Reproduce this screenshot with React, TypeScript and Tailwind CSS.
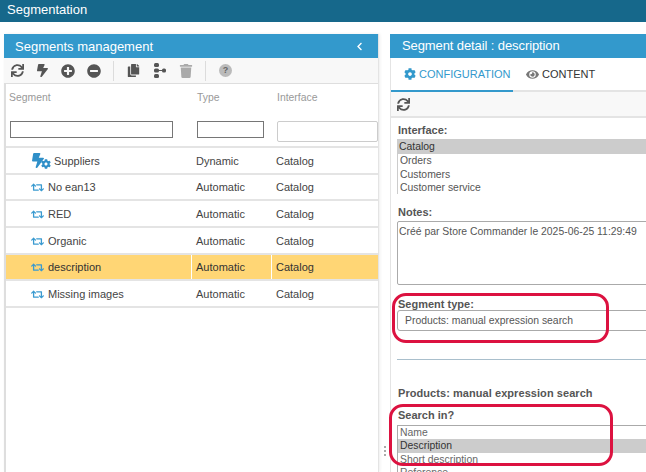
import React from "react";
import { FaSync, FaBolt, FaPlusCircle, FaMinusCircle, FaCopy, FaTrash, FaCog, FaEye, FaRetweet, FaChevronLeft } from "react-icons/fa";

const DynIcon = () => (
  <div className="relative w-[19px] h-[16px] shrink-0 text-[#2f8fc8]">
    <FaBolt preserveAspectRatio="none" className="absolute left-0 top-0 w-[12px] h-[15px]" />
    <FaCog size={10} className="absolute right-0 bottom-0" />
  </div>
);

const rows = [
  { name: "Suppliers", type: "Dynamic", h: "h-[27px]", dyn: true },
  { name: "No ean13", type: "Automatic", h: "h-[26px]" },
  { name: "RED", type: "Automatic", h: "h-[27px]" },
  { name: "Organic", type: "Automatic", h: "h-[27px]" },
  { name: "description", type: "Automatic", h: "h-[26px]", sel: true },
  { name: "Missing images", type: "Automatic", h: "h-[27px]" },
];

const Sep = () => <div className="w-px h-[20px] bg-[#dcdcdc]" />;

const Tree = () => (
  <svg width="12" height="15" viewBox="0 0 12 15" fill="#555">
    <rect x="0" y="0" width="5" height="4" rx="1.5" />
    <rect x="0" y="5.5" width="5" height="4" rx="1.5" />
    <rect x="0" y="11" width="5" height="4" rx="1.5" />
    <rect x="8" y="5.5" width="4" height="4" rx="1.5" />
    <rect x="5" y="7" width="3" height="1" />
  </svg>
);

export default function App() {
  return (
    <div className="w-[646px] h-[472px] overflow-hidden bg-white relative text-[#333] font-['Liberation_Sans',Arial,sans-serif]">
      <div className="h-[22px] bg-[#16688b] text-white text-[13px] leading-[20px] pl-[7px]">Segmentation</div>
      <div className="flex pt-[12px] pl-[4px] h-[450px]">
        {/* Left */}
        <div className="w-[375px] shrink-0 flex flex-col border-r border-[#e4e4e4] shadow-[1px_0_3px_#eeeeee]">
          <div className="h-[24px] bg-[#3399cc] text-white text-[13px] leading-[23px] pl-[11px] pr-[14px] flex items-center justify-between shrink-0">
            <span>Segments management</span>
            <FaChevronLeft size={9} />
          </div>
          <div className="h-[25px] bg-[#f8f8f8] flex items-center shrink-0 pl-[7px] text-[#555]">
            <FaSync size={13} />
            <FaBolt preserveAspectRatio="none" className="ml-[13px] w-[11px] h-[13px]" />
            <FaPlusCircle size={14} className="ml-[13px]" />
            <FaMinusCircle size={14} className="ml-[12px]" />
            <div className="ml-[12px]"><Sep /></div>
            <FaCopy size={13} className="ml-[13px]" />
            <div className="ml-[14px]"><Tree /></div>
            <FaTrash size={14} className="ml-[13px] text-[#aaaaaa]" />
            <div className="ml-[12px]"><Sep /></div>
            <div className="ml-[13px] w-[13px] h-[13px] rounded-full bg-[#bbbbbb] text-[#666] text-[9px] font-bold flex items-center justify-center">?</div>
          </div>
          <div className="border-t border-l-2 border-[#dedede] flex-1 min-h-0 flex flex-col">
            <div className="h-[64px] border-b-2 border-[#e4e4e4] flex shrink-0 text-[10.4px] text-[#999]">
              <div className="w-[186px] pl-[3px] pt-[8px] shrink-0">
                <div className="leading-[12px]">Segment</div>
                <div className="w-[163px] h-[17px] border border-[#767676] bg-white mt-[17px] ml-px" />
              </div>
              <div className="w-[80px] pl-[5px] pt-[8px] shrink-0">
                <div className="leading-[12px]">Type</div>
                <div className="w-[67px] h-[17px] border border-[#767676] bg-white mt-[17px]" />
              </div>
              <div className="flex-1 pl-[5px] pt-[8px] min-w-0">
                <div className="leading-[12px]">Interface</div>
                <div className="h-[21px] border border-[#cccccc] rounded-[2px] bg-white mt-[17px]" />
              </div>
            </div>
            {rows.map((r) => (
              <div key={r.name} className={`${r.h} flex shrink-0 border-b-2 border-[#e4e4e4] text-[11px] ${r.sel ? "bg-[#ffd675] text-[#333]" : "text-[#444]"}`}>
                <div className="w-[186px] shrink-0 flex items-center border-r border-white pl-[26px] pt-px gap-[3px]">
                  {r.dyn ? <DynIcon /> : <FaRetweet size={13} className="text-[#3a9ad0] shrink-0 -ml-px mr-px" />}
                  <span>{r.name}</span>
                </div>
                <div className="w-[80px] shrink-0 pl-[4px] pt-px flex items-center border-r border-white">{r.type}</div>
                <div className="flex-1 pl-[4px] pt-px flex items-center">Catalog</div>
              </div>
            ))}
          </div>
        </div>
        {/* Divider */}
        <div className="w-[11px] shrink-0 flex flex-col justify-end items-center pb-[16px] gap-[2px]">
          <div className="w-[2px] h-[2px] bg-[#aaa]" />
          <div className="w-[2px] h-[2px] bg-[#aaa]" />
          <div className="w-[2px] h-[2px] bg-[#aaa]" />
        </div>
        {/* Right */}
        <div className="flex-1 min-w-0 flex flex-col border-l border-[#e4e4e4]">
          <div className="h-[24px] bg-[#3399cc] text-white text-[13px] leading-[23px] pl-[12px] shrink-0 -ml-px tracking-[-0.1px]">Segment detail : description</div>
          <div className="h-[34px] border-b-2 border-[#e4e4e4] flex text-[11px] shrink-0">
            <div className="w-[122px] h-[34px] border-b-2 border-[#3399cc] text-[#3399cc] flex items-center gap-[3px] pl-[13px] shrink-0">
              <FaCog size={12} className="shrink-0" />
              <span>CONFIGURATION</span>
            </div>
            <div className="flex items-center gap-[3px] ml-[13px] text-[#333]">
              <FaEye size={13} className="text-[#777] shrink-0" />
              <span>CONTENT</span>
            </div>
          </div>
          <div className="h-[26px] bg-[#f8f8f8] border-b-2 border-[#e4e4e4] flex items-center pl-[6px] shrink-0 text-[#555]">
            <FaSync size={13} />
          </div>
          <div className="pl-[6px] text-[10.4px] flex-1 min-h-0 overflow-hidden">
            <div className="font-bold text-[11px] text-[#555] leading-[12px] mt-[6px] pl-px">Interface:</div>
            <div className="h-[55px] leading-[13.5px] mt-[3px] border-t border-l border-[#cccccc]">
              <div className="bg-[#cccccc] h-[14px] pl-px">Catalog</div>
              <div className="pl-[2px] text-[#555]">Orders</div>
              <div className="pl-[2px] text-[#555]">Customers</div>
              <div className="pl-[2px] text-[#555]">Customer service</div>
            </div>
            <div className="font-bold text-[11px] text-[#555] leading-[12px] mt-[12px] pl-px">Notes:</div>
            <div className="h-[64px] border border-[#aaaaaa] rounded-[2px] text-[#555] leading-[12px] mt-[3px] pl-px pt-[4px] -mr-[4px] whitespace-nowrap">Créé par Store Commander le 2025-06-25 11:29:49</div>
            <div className="font-bold text-[11px] text-[#555] leading-[12px] mt-[13px] pl-px">Segment type:</div>
            <div className="h-[21px] border border-[#aaaaaa] rounded-[3px] text-[#555] leading-[19px] pl-[7px] -mr-[4px]">Products: manual expression search</div>
            <div className="h-px bg-[#a9bfcc] mt-[28px] -mr-[4px]" />
            <div className="font-bold text-[11px] text-[#555] leading-[12px] mt-[27px] pl-px tracking-[0.06px]">Products: manual expression search</div>
            <div className="font-bold text-[11px] text-[#555] leading-[12px] mt-[10px] pl-px">Search in?</div>
            <div className="leading-[13.5px] mt-[4px] border-t border-l border-[#aaaaaa] text-[#666]">
              <div className="pl-[2px] h-[13px]">Name</div>
              <div className="pl-[2px] h-[14px] bg-[#cccccc] text-[#333]">Description</div>
              <div className="pl-[2px] h-[13px]">Short description</div>
              <div className="pl-[2px] h-[13px] leading-[14px]">Reference</div>
            </div>
          </div>
        </div>
      </div>
      {/* Annotations */}
      <div className="absolute left-[392px] top-[293px] w-[217px] h-[50px] border-[3px] border-[#dc1240] rounded-[14px]" />
      <div className="absolute left-[389px] top-[404px] w-[224px] h-[62px] border-[3px] border-[#dc1240] rounded-[14px]" />
    </div>
  );
}
